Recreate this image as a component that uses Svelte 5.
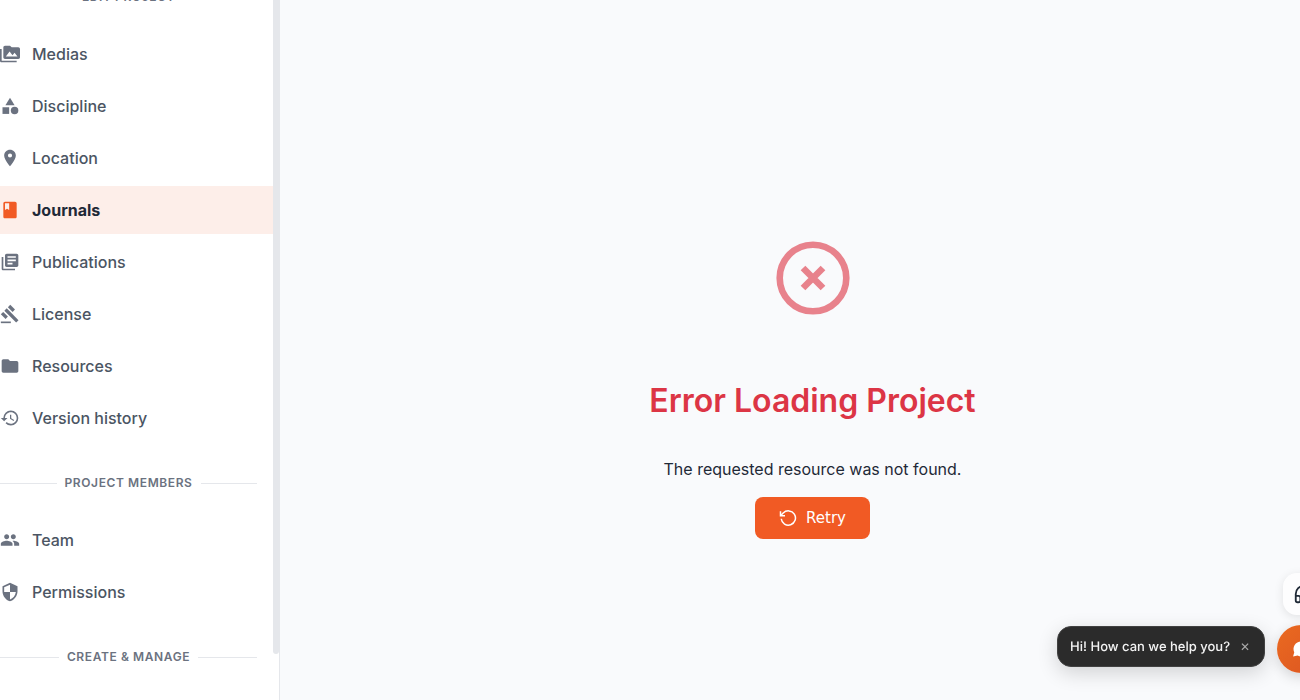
<script>
  const sections = [
    {
      title: 'Edit project',
      items: [
        { label: 'Medias', paths: ['M2 6H0v14c0 1.100.9 2 2 2h18v-2H2V6z', 'M22 4h-8l-2-2H6c-1.100 0-1.990.9-1.990 2L4 16c0 1.100.9 2 2 2h16c1.100 0 2-.9 2-2V6c0-1.100-.9-2-2-2zM7 15l4.500-6 3.500 4.510 2.500-3.010L21 15H7z'] },
        { label: 'Discipline', paths: ['M12 2l-5.500 9h11z', 'M17.500 13a4.500 4.500 0 1 0 0 9 4.500 4.500 0 0 0 0-9z', 'M3 13.500h8v8H3z'] },
        { label: 'Location', paths: ['M12 2C8.130 2 5 5.130 5 9c0 5.250 7 13 7 13s7-7.750 7-13c0-3.870-3.130-7-7-7zm0 9.500a2.500 2.500 0 0 1 0-5 2.500 2.500 0 0 1 0 5z'] },
        { label: 'Journals', active: true, paths: ['M18 2H6c-1.100 0-2 .9-2 2v16c0 1.100.9 2 2 2h12c1.100 0 2-.9 2-2V4c0-1.100-.9-2-2-2zM6 4h5v8l-2.500-1.500L6 12V4z'] },
        { label: 'Publications', paths: ['M4 6H2v14c0 1.100.9 2 2 2h14v-2H4V6z', 'M20 2H8c-1.100 0-2 .9-2 2v12c0 1.100.9 2 2 2h12c1.100 0 2-.9 2-2V4c0-1.100-.9-2-2-2zm-1 9H9V9h10v2zm-4 4H9v-2h6v2zm4-8H9V5h10v2z'] },
        { label: 'License', paths: ['M1 21h12v2H1z', 'M5.245 8.070l2.830-2.827 14.140 14.142-2.828 2.828z', 'M12.317 1l5.657 5.656-2.830 2.830-5.654-5.660z', 'M3.825 9.485l5.657 5.657-2.828 2.828-5.657-5.657z'] },
        { label: 'Resources', paths: ['M10 4H4c-1.100 0-1.990.9-1.990 2L2 18c0 1.100.9 2 2 2h16c1.100 0 2-.9 2-2V8c0-1.100-.9-2-2-2h-8l-2-2z'] },
        { label: 'Version history', paths: ['M13 3a9 9 0 0 0-9 9H1l3.890 3.890.07.140L9 12H6c0-3.870 3.130-7 7-7s7 3.130 7 7-3.130 7-7 7c-1.930 0-3.680-.79-4.940-2.060l-1.420 1.420A8.954 8.954 0 0 0 13 21a9 9 0 0 0 0-18zm-1 5v5l4.280 2.540.72-1.210-3.500-2.080V8H12z'] }
      ]
    },
    {
      title: 'Project members',
      items: [
        { label: 'Team', paths: ['M16 11c1.660 0 2.990-1.340 2.990-3S17.660 5 16 5s-3 1.340-3 3 1.340 3 3 3zm-8 0c1.660 0 2.990-1.340 2.990-3S9.660 5 8 5 5 6.340 5 8s1.340 3 3 3zm0 2c-2.330 0-7 1.170-7 3.500V19h14v-2.500c0-2.330-4.670-3.500-7-3.500zm8 0c-.29 0-.62.02-.97.05 1.160.84 1.970 1.970 1.970 3.450V19h6v-2.500c0-2.330-4.670-3.500-7-3.500z'] },
        { label: 'Permissions', paths: ['M12 1L3 5v6c0 5.550 3.840 10.740 9 12 5.160-1.260 9-6.450 9-12V5l-9-4zm0 10.990h7c-.53 4.120-3.280 7.790-7 8.940V12H5V6.300l7-3.110v8.800z'] }
      ]
    },
    { title: 'Create & manage', items: [] }
  ];
  let showHint = $state(true);
</script>

<div class="layout">
  <aside class="sidebar">
    <nav aria-label="Project">
      {#each sections as section}
        <h2 class="section-title">{section.title}</h2>
        <ul>
          {#each section.items as item}
            <li>
              <a href="#top" class="nav-link" class:active={item.active} aria-current={item.active ? 'page' : undefined}>
                <svg class="nav-icon" viewBox="0 0 24 24" aria-hidden="true">
                  {#each item.paths as d}<path {d} />{/each}
                </svg>
                <span>{item.label}</span>
              </a>
            </li>
          {/each}
        </ul>
      {/each}
    </nav>
    <div class="scroll-thumb"></div>
  </aside>

  <main>
    <svg class="error-icon" viewBox="0 0 74 74" aria-hidden="true">
      <circle cx="37" cy="37" r="33.300" />
      <path d="M27 27l20 20M47 27l-20 20" />
    </svg>
    <h1>Error Loading Project</h1>
    <p>The requested resource was not found.</p>
    <button class="retry" type="button">
      <svg viewBox="0 0 24 24" aria-hidden="true">
        <path d="M3 13a9.500 9.500 0 1 0 2.600-7.600L2 9" />
        <path d="M2 3v6h6" />
      </svg>
      <span>Retry</span>
    </button>
  </main>
</div>

<div class="support">
  {#if showHint}
    <div class="hint">
      <span>Hi! How can we help you?</span>
      <button type="button" aria-label="Close" onclick={() => (showHint = false)}>✕</button>
    </div>
  {/if}
  <div class="launchers">
    <button class="headset" type="button" aria-label="Support">
      <svg viewBox="0 0 24 24" aria-hidden="true">
        <path d="M3 14h3a2 2 0 0 1 2 2v3a2 2 0 0 1-2 2H5a2 2 0 0 1-2-2v-7a9 9 0 0 1 18 0v7a2 2 0 0 1-2 2h-1a2 2 0 0 1-2-2v-3a2 2 0 0 1 2-2h3" />
      </svg>
    </button>
    <button class="chat" type="button" aria-label="Chat">
      <svg viewBox="0 0 24 24" aria-hidden="true">
        <path d="M12 3a9 9 0 0 0-8.100 12.900L2.500 21l5.400-1.100A9 9 0 1 0 12 3z" />
      </svg>
    </button>
  </div>
</div>

<style>
  :global(body) {
    margin: 0;
    overflow: hidden;
    background: #f9fafc;
    color: #1f2937;
    font-family: Inter, 'Liberation Sans', sans-serif;
    font-size: 16px;
    line-height: 24px;
  }
  button {
    border: 0;
    padding: 0;
    font: inherit;
    cursor: pointer;
  }
  .layout {
    display: flex;
    height: 100vh;
  }
  .sidebar {
    box-sizing: border-box;
    flex: 0 0 280px;
    display: flex;
    align-items: flex-start;
    overflow: hidden;
    background: #fff;
    border-right: 1px solid #e5e7eb;
  }
  nav {
    flex: 1;
    margin-top: -44px;
  }
  .scroll-thumb {
    width: 6px;
    height: calc(100% - 46px);
    background: #e5e7eb;
    border-radius: 0 0 3px 3px;
  }
  .section-title {
    display: flex;
    align-items: center;
    gap: 8px;
    height: 18px;
    margin: 0 16px 0 0;
    padding: 32px 0 24px;
    color: #6b7280;
    font-size: 12px;
    font-weight: 600;
    line-height: 18px;
    letter-spacing: 0.6px;
    text-transform: uppercase;
  }
  .section-title::before,
  .section-title::after {
    content: '';
    flex: 1;
    height: 1px;
    background: #e5e7eb;
  }
  ul {
    display: flex;
    flex-direction: column;
    gap: 4px;
    margin: 0;
    padding: 0;
    list-style: none;
  }
  .nav-link {
    display: flex;
    align-items: center;
    gap: 12px;
    height: 48px;
    color: #4b5563;
    font-weight: 500;
    text-decoration: none;
  }
  .nav-link.active {
    background: #fdeee9;
    color: #1f2937;
    font-weight: 700;
  }
  .nav-icon {
    width: 20px;
    height: 20px;
    fill: #6b7280;
  }
  .active .nav-icon {
    fill: #f15a24;
  }
  main {
    flex: 1;
    display: flex;
    flex-direction: column;
    align-items: center;
    justify-content: center;
    padding: 80px 0 0 45px;
  }
  .error-icon {
    width: 74px;
    fill: none;
    stroke: #e8828c;
    stroke-width: 6.6;
  }
  h1 {
    margin: 64px 0 34px;
    color: #dc3545;
    font-size: 32px;
    font-weight: 600;
    line-height: 44px;
  }
  p {
    margin: 0 0 16px;
  }
  .retry {
    display: flex;
    align-items: center;
    gap: 9px;
    padding: 9px 24px;
    border-radius: 8px;
    background: #f15a24;
    color: #fff;
    font-family: 'DejaVu Sans', sans-serif;
    font-size: 15px;
  }
  .retry svg {
    width: 18px;
    fill: none;
    stroke: currentColor;
    stroke-width: 2;
  }
  .support {
    position: fixed;
    right: -25px;
    bottom: 27px;
    display: flex;
    align-items: flex-end;
    gap: 12px;
  }
  .hint {
    box-sizing: border-box;
    display: flex;
    align-items: center;
    gap: 8px;
    height: 41px;
    margin-bottom: 6px;
    padding: 0 12px;
    border: 1px solid #414141;
    border-radius: 14px;
    background: #2b2b2b;
    box-shadow: 0 6px 20px rgba(0, 0, 0, 0.16);
    color: #f3f3f3;
    font-size: 13px;
    font-weight: 500;
    text-rendering: geometricPrecision;
  }
  .hint button {
    width: 14px;
    background: none;
    color: #aaa;
    font-size: 12px;
  }
  .launchers {
    display: flex;
    flex-direction: column;
    align-items: flex-end;
    gap: 10px;
  }
  .launchers button {
    display: grid;
    place-items: center;
  }
  .headset {
    width: 42px;
    height: 42px;
    border-radius: 14px;
    background: #fdfdfe;
    box-shadow: 0 2px 10px rgba(0, 0, 0, 0.1);
  }
  .headset svg {
    width: 22px;
    fill: none;
    stroke: #1f2937;
    stroke-width: 2;
  }
  .chat {
    width: 48px;
    height: 48px;
    border-radius: 50%;
    background: linear-gradient(135deg, #ea6a20, #dc5522);
    box-shadow: 0 4px 14px rgba(0, 0, 0, 0.16);
  }
  .chat svg {
    width: 20px;
    fill: #fff;
  }
</style>
